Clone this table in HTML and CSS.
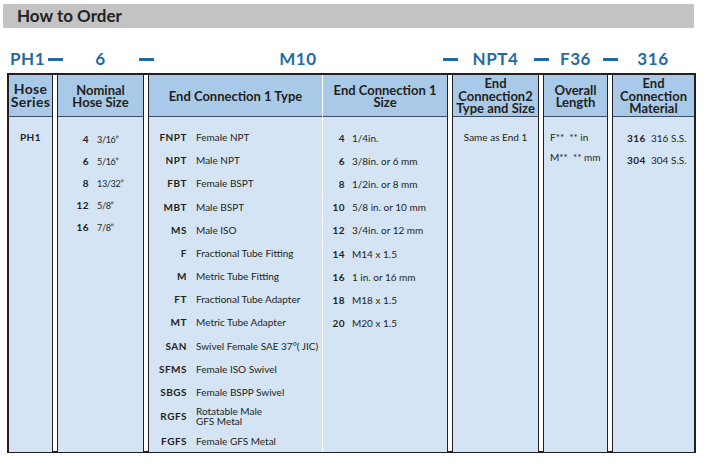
FILE: index.html
```html
<!DOCTYPE html>
<html lang="en">
<head>
<meta charset="utf-8">
<title>How to Order</title>
<link rel="stylesheet" href="styles.css">
</head>
<body>
<div class="page">
  <div class="title-bar"><h1 class="title">How to Order</h1></div>

  <div class="codes">
    <span class="code">PH1</span><span class="dash-cell"><i class="dash"></i></span>
    <span class="code">6</span><span class="dash-cell"><i class="dash"></i></span>
    <span class="code">M10</span><span class="dash-cell"><i class="dash"></i></span>
    <span class="code">NPT4</span><span class="dash-cell"><i class="dash"></i></span>
    <span class="code">F36</span><span class="dash-cell"><i class="dash"></i></span>
    <span class="code">316</span>
  </div>

  <div class="table">
    <div class="col c1">
      <div class="head head-lg">Hose<br>Series</div>
      <div class="body">
        <div class="single"><b>PH1</b></div>
      </div>
    </div>

    <div class="col c2">
      <div class="head">Nominal<br>Hose Size</div>
      <div class="body">
        <div class="list list-c2">
          <b>4</b><span class="frac">3/16”</span>
          <b>6</b><span class="frac">5/16”</span>
          <b>8</b><span class="frac">13/32”</span>
          <b>12</b><span class="frac">5/8”</span>
          <b>16</b><span class="frac">7/8”</span>
        </div>
      </div>
    </div>

    <div class="col c34">
      <div class="half c3">
        <div class="head">End Connection 1 Type</div>
        <div class="body">
          <div class="list list-c3">
            <b>FNPT</b><span>Female NPT</span>
            <b>NPT</b><span>Male NPT</span>
            <b>FBT</b><span>Female BSPT</span>
            <b>MBT</b><span>Male BSPT</span>
            <b>MS</b><span>Male ISO</span>
            <b>F</b><span>Fractional Tube Fitting</span>
            <b>M</b><span>Metric Tube Fitting</span>
            <b>FT</b><span>Fractional Tube Adapter</span>
            <b>MT</b><span>Metric Tube Adapter</span>
            <b>SAN</b><span>Swivel Female SAE 37°( JIC)</span>
            <b>SFMS</b><span>Female ISO Swivel</span>
            <b>SBGS</b><span>Female BSPP Swivel</span>
            <b class="tall">RGFS</b><span class="tall two-line">Rotatable Male<br>GFS Metal</span>
            <b>FGFS</b><span>Female GFS Metal</span>
          </div>
        </div>
      </div>
      <div class="half c4">
        <div class="head">End Connection 1<br>Size</div>
        <div class="body">
          <div class="list list-c4">
            <b>4</b><span>1/4in.</span>
            <b>6</b><span>3/8in. or 6 mm</span>
            <b>8</b><span>1/2in. or 8 mm</span>
            <b>10</b><span>5/8 in. or 10 mm</span>
            <b>12</b><span>3/4in. or 12 mm</span>
            <b>14</b><span>M14 x 1.5</span>
            <b>16</b><span>1 in. or 16 mm</span>
            <b>18</b><span>M18 x 1.5</span>
            <b>20</b><span>M20 x 1.5</span>
          </div>
        </div>
      </div>
    </div>

    <div class="col c5">
      <div class="head">End<br>Connection2<br>Type and Size</div>
      <div class="body">
        <div class="single">Same as End 1</div>
      </div>
    </div>

    <div class="col c6">
      <div class="head">Overall<br>Length</div>
      <div class="body">
        <div class="list list-c6">
          <span>F**&nbsp;&nbsp;** in</span>
          <span>M**&nbsp;&nbsp;** mm</span>
        </div>
      </div>
    </div>

    <div class="col c7">
      <div class="head">End<br>Connection<br>Material</div>
      <div class="body">
        <div class="list list-c7">
          <b>316</b><span>316 S.S.</span>
          <b>304</b><span>304 S.S.</span>
        </div>
      </div>
    </div>
  </div>
</div>
</body>
</html>
```

FILE: styles.css
```css
* {
  box-sizing: border-box;
}

html, body {
  margin: 0;
  padding: 0;
  background: #ffffff;
}

body {
  font-family: Lato, "Open Sans", "Liberation Sans", sans-serif;
  color: #231f20;
  width: 713px;
  height: 470px;
  overflow: hidden;
}

.page {
  padding-top: 4px;
}

/* Title bar */
.title-bar {
  margin: 0 19px 0 3px;
  height: 24px;
  background: #c3c3c3;
  display: flex;
  align-items: center;
  padding-left: 14px;
}

.title {
  margin: 0;
  font-size: 17px;
  font-weight: 700;
  color: #222222;
  line-height: 24px;
}

/* Code row */
.codes {
  margin: 20px 0 0 9px;
  width: 685px;
  height: 22px;
  display: grid;
  grid-template-columns: 44px 4px 87px 4px 300px 4px 87px 4px 65px 4px 82px;
  align-items: center;
  color: #1f6ba6;
}

.code {
  text-align: center;
  font-size: 17px;
  font-weight: 700;
  letter-spacing: 0.6px;
  line-height: 22px;
}

.codes .code:first-child {
  text-align: left;
  padding-left: 1px;
}

.dash-cell {
  display: flex;
  justify-content: center;
  align-items: center;
  height: 22px;
}

.dash {
  flex: none;
  display: block;
  width: 15px;
  height: 3px;
  background: #1f6ba6;
}

/* Table */
.table {
  margin: 3px 0 0 7px;
  width: 689px;
  height: 380px;
  border: 2px solid #231f20;
  background: #ffffff;
  display: grid;
  grid-template-columns: 44px 87px 300px 87px 65px 82px;
  column-gap: 4px;
}

.col {
  display: flex;
  flex-direction: column;
  border-left: 1px solid #231f20;
  border-right: 1px solid #231f20;
  min-width: 0;
}

.c1 {
  border-left: none;
}

.c7 {
  border-right: none;
}

.c34 {
  flex-direction: row;
}

.half {
  display: flex;
  flex-direction: column;
}

.c3 {
  width: 174px;
  border-right: 1px solid #ffffff;
}

.c4 {
  flex: 1;
}

.head {
  height: 42px;
  flex: none;
  background: #a9c9e8;
  border-bottom: 1px solid #3b4e63;
  display: flex;
  align-items: center;
  justify-content: center;
  text-align: center;
  font-size: 13px;
  font-weight: 700;
  line-height: 12.5px;
  white-space: nowrap;
  color: #231f20;
  padding-top: 1px;
}

.head-lg {
  font-size: 14px;
  letter-spacing: 0.3px;
  line-height: 12.7px;
}

.body {
  flex: 1;
  background: #d4e4f5;
  font-size: 10px;
}

.body b {
  font-weight: 700;
  letter-spacing: 0.5px;
}

.single {
  height: 23.2px;
  margin-top: 8.4px;
  display: flex;
  align-items: center;
  justify-content: center;
  white-space: nowrap;
}

.list {
  display: grid;
  align-items: center;
  white-space: nowrap;
}

.list b {
  text-align: right;
}

.list-c2 {
  padding-top: 11px;
  grid-template-columns: 31px 1fr;
  column-gap: 8px;
  grid-auto-rows: 22px;
}

.frac {
  font-size: 9px;
  letter-spacing: -0.3px;
}

.list-c3 {
  padding-top: 8.4px;
  grid-template-columns: 38px 1fr;
  column-gap: 9px;
  grid-auto-rows: 23.2px;
}

.list-c3 .tall {
  height: 25px;
  display: flex;
  align-items: center;
  justify-content: flex-end;
}

.list-c3 .two-line {
  justify-content: flex-start;
  line-height: 10px;
}

.list-c3 {
  grid-template-rows: repeat(12, 23.2px) 25.6px 23.2px;
}

.list-c4 {
  padding-top: 9.5px;
  grid-template-columns: 22px 1fr;
  column-gap: 7px;
  grid-auto-rows: 23.1px;
}

.list-c6 {
  padding-top: 10px;
  padding-left: 6px;
  grid-auto-rows: 20px;
}

.list-c7 {
  padding-top: 10px;
  padding-left: 14px;
  grid-template-columns: 17px 1fr;
  column-gap: 7px;
  grid-auto-rows: 22px;
}

.list-c7 b {
  text-align: left;
}
```
